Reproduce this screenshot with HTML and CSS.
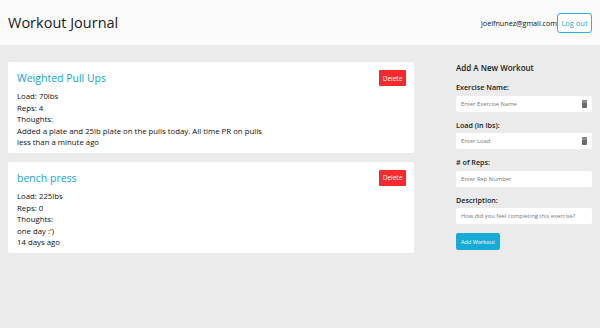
FILE: index.html
```html
<!DOCTYPE html>
<html lang="en">
<head>
    <meta charset="UTF-8">
    <meta name="viewport" content="width=device-width, initial-scale=1.0">
    <title>Workout Journal</title>
    <link rel="stylesheet" href="styles.css">
</head>
<body>
    <header class="top-bar">
        <h1>Workout Journal</h1>
        <div class="user-box">
            <span class="user-email">joelfnunez@gmail.com</span>
            <button type="button" class="logout-btn">Log out</button>
        </div>
    </header>

    <main class="page">
        <section class="workout-list">
            <div class="workout-card">
                <div class="card-head">
                    <h2>Weighted Pull Ups</h2>
                    <button type="button" class="delete-btn">Delete</button>
                </div>
                <p>Load: 70lbs</p>
                <p>Reps: 4</p>
                <p>Thoughts:</p>
                <p>Added a plate and 25lb plate on the pulls today. All time PR on pulls</p>
                <p>less than a minute ago</p>
            </div>

            <div class="workout-card">
                <div class="card-head">
                    <h2>bench press</h2>
                    <button type="button" class="delete-btn">Delete</button>
                </div>
                <p>Load: 225lbs</p>
                <p>Reps: 0</p>
                <p>Thoughts:</p>
                <p>one day :')</p>
                <p>14 days ago</p>
            </div>
        </section>

        <form class="workout-form">
            <h3>Add A New Workout</h3>

            <label for="exerciseName">Exercise Name:</label>
            <div class="field">
                <input type="text" id="exerciseName" placeholder="Enter Exercise Name">
                <span class="fill-icon"></span>
            </div>

            <label for="load">Load (in lbs):</label>
            <div class="field">
                <input type="text" id="load" placeholder="Enter Load">
                <span class="fill-icon"></span>
            </div>

            <label for="reps"># of Reps:</label>
            <div class="field">
                <input type="text" id="reps" placeholder="Enter Rep Number">
            </div>

            <label for="description">Description:</label>
            <div class="field">
                <input type="text" id="description" placeholder="How did you feel completing this exercise?">
            </div>

            <button type="button" class="add-btn">Add Workout</button>
        </form>
    </main>
</body>
</html>
```

FILE: styles.css
```css
body {
    font-family: "Open Sans", Arial, sans-serif;
    background-color: #ebebeb;
    color: #111;
    margin: 0;
    padding: 0;
}

.top-bar {
    background-color: #fbfbfb;
    height: 45px;
    padding: 0 8px;
    display: flex;
    justify-content: space-between;
    align-items: center;
}

.top-bar h1 {
    margin: 0;
    font-size: 14.5px;
    font-weight: 400;
    color: #1a1a1a;
}

.user-box {
    display: flex;
    align-items: center;
}

.user-email {
    font-size: 7.2px;
    color: #111;
}

.logout-btn {
    height: 20px;
    width: 35px;
    padding: 0;
    background: #fff;
    border: 1px solid #2bb3d9;
    border-radius: 3px;
    color: #1fa5cf;
    font-family: inherit;
    font-size: 7.5px;
}

.page {
    display: flex;
    align-items: flex-start;
    padding: 17px 8px;
}

.workout-list {
    width: 406px;
    display: flex;
    flex-direction: column;
    gap: 9px;
}

.workout-card {
    background-color: #fff;
    border-radius: 2px;
    padding: 8px 8px 4px 9px;
}

.card-head {
    display: flex;
    justify-content: space-between;
    align-items: center;
    height: 16px;
    margin-bottom: 5px;
}

.card-head h2 {
    margin: 0;
    font-size: 10.5px;
    font-weight: 400;
    color: #20a4cc;
}

.delete-btn {
    width: 27px;
    height: 16px;
    padding: 0;
    background-color: #f42a2e;
    color: #fff;
    border: none;
    border-radius: 1px;
    font-family: inherit;
    font-size: 6.5px;
}

.workout-card p {
    margin: 0;
    font-size: 7.8px;
    line-height: 11.6px;
    color: #111;
}

.workout-form {
    width: 136px;
    margin-left: 42px;
    display: flex;
    flex-direction: column;
}

.workout-form h3 {
    margin: 0 0 7px;
    font-size: 8px;
    line-height: 12px;
    font-weight: 600;
    color: #1a1a1a;
}

.workout-form label {
    display: block;
    font-size: 7.2px;
    line-height: 12px;
    font-weight: 600;
    color: #1a1a1a;
    margin-bottom: 2.5px;
}

.field {
    position: relative;
    margin-bottom: 7px;
}

.field input {
    display: block;
    width: 100%;
    height: 16px;
    box-sizing: border-box;
    border: none;
    border-radius: 2px;
    padding: 0 5px;
    font-family: inherit;
    font-size: 5.8px;
    background: #fff;
}

.field input::placeholder {
    color: #777;
}

.fill-icon {
    position: absolute;
    right: 5px;
    top: 4px;
    width: 5px;
    height: 8px;
    background: #6a6a6a;
    border-radius: 1px;
    box-shadow: inset 0 3px 0 #8a8a8a;
}

.add-btn {
    align-self: flex-start;
    width: 44px;
    height: 17px;
    padding: 0;
    margin-top: 2px;
    background-color: #18aad6;
    color: #fff;
    border: none;
    border-radius: 2px;
    font-family: inherit;
    font-size: 5.5px;
}
```
